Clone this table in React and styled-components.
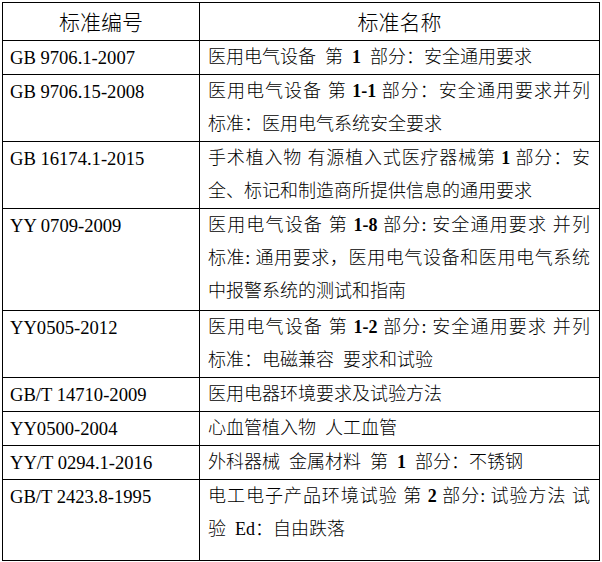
import React from "react";
import styled, { createGlobalStyle } from "styled-components";

const GlobalStyle = createGlobalStyle`
  html, body {
    margin: 0;
    padding: 0;
    background: #ffffff;
  }
  body {
    font-family: "Liberation Serif", "Noto Sans CJK SC", serif;
    color: #000000;
  }
`;

const Page = styled.div`
  padding: 2px 0 0 2px;
`;

const Table = styled.table`
  border-collapse: collapse;
  table-layout: fixed;
  width: 597px;
`;

const HeadCell = styled.th`
  border: 1px solid #000;
  font-size: 21px;
  font-weight: 300;
  line-height: 33px;
  text-align: center;
  padding: 4px 0 0;
`;

const CodeCell = styled.td`
  border: 1px solid #000;
  font-size: 18.6px;
  line-height: 33px;
  padding: 0 6px ${(p) => p.$tail}px 7px;
  vertical-align: top;
  white-space: nowrap;
`;

const NameCell = styled.td`
  border: 1px solid #000;
  font-size: 18px;
  font-weight: 300;
  line-height: 33px;
  padding: 0 9px ${(p) => p.$tail}px 8px;
  vertical-align: top;
`;

const Line = styled.div`
  text-align: ${(p) => (p.$justify ? "justify" : "left")};
  text-align-last: ${(p) => (p.$justify ? "justify" : "auto")};
  word-spacing: ${(p) => (p.$justify ? "0" : "4.5px")};
`;

const Num = styled.span`
  font-family: "Liberation Serif", serif;
  font-weight: 700;
`;

const rows = [
  { code: "GB 9706.1-2007", lines: ["医用电气设备 第 1 部分：安全通用要求"] },
  {
    code: "GB 9706.15-2008",
    lines: ["医用电气设备 第 1-1 部分：安全通用要求并列", "标准：医用电气系统安全要求"],
  },
  {
    code: "GB 16174.1-2015",
    lines: ["手术植入物 有源植入式医疗器械第 1 部分：安", "全、标记和制造商所提供信息的通用要求"],
  },
  {
    code: "YY 0709-2009",
    tail: 2,
    lines: [
      "医用电气设备 第 1-8 部分: 安全通用要求 并列",
      "标准: 通用要求，医用电气设备和医用电气系统",
      "中报警系统的测试和指南",
    ],
  },
  {
    code: "YY0505-2012",
    lines: ["医用电气设备 第 1-2 部分: 安全通用要求 并列", "标准：电磁兼容 要求和试验"],
  },
  { code: "GB/T 14710-2009", lines: ["医用电器环境要求及试验方法"] },
  { code: "YY0500-2004", lines: ["心血管植入物 人工血管"] },
  { code: "YY/T 0294.1-2016", lines: ["外科器械 金属材料 第 1 部分：不锈钢"] },
  {
    code: "GB/T 2423.8-1995",
    tail: 14,
    lines: ["电工电子产品环境试验 第 2 部分: 试验方法 试", "验 Ed：自由跌落"],
  },
];

function renderText(text) {
  return text.split(/(\d[\d-]*)/).map((part, i) =>
    /^\d/.test(part) ? <Num key={i}>{part}</Num> : <React.Fragment key={i}>{part}</React.Fragment>
  );
}

export default function App() {
  return (
    <>
      <GlobalStyle />
      <Page>
        <Table>
          <colgroup>
            <col style={{ width: "197px" }} />
            <col style={{ width: "400px" }} />
          </colgroup>
          <thead>
            <tr>
              <HeadCell>标准编号</HeadCell>
              <HeadCell>标准名称</HeadCell>
            </tr>
          </thead>
          <tbody>
            {rows.map((row) => {
              const tail = row.tail || 0;
              return (
                <tr key={row.code}>
                  <CodeCell $tail={tail}>{row.code}</CodeCell>
                  <NameCell $tail={tail}>
                    {row.lines.map((line, li) => (
                      <Line key={li} $justify={li < row.lines.length - 1}>
                        {renderText(line)}
                      </Line>
                    ))}
                  </NameCell>
                </tr>
              );
            })}
          </tbody>
        </Table>
      </Page>
    </>
  );
}
